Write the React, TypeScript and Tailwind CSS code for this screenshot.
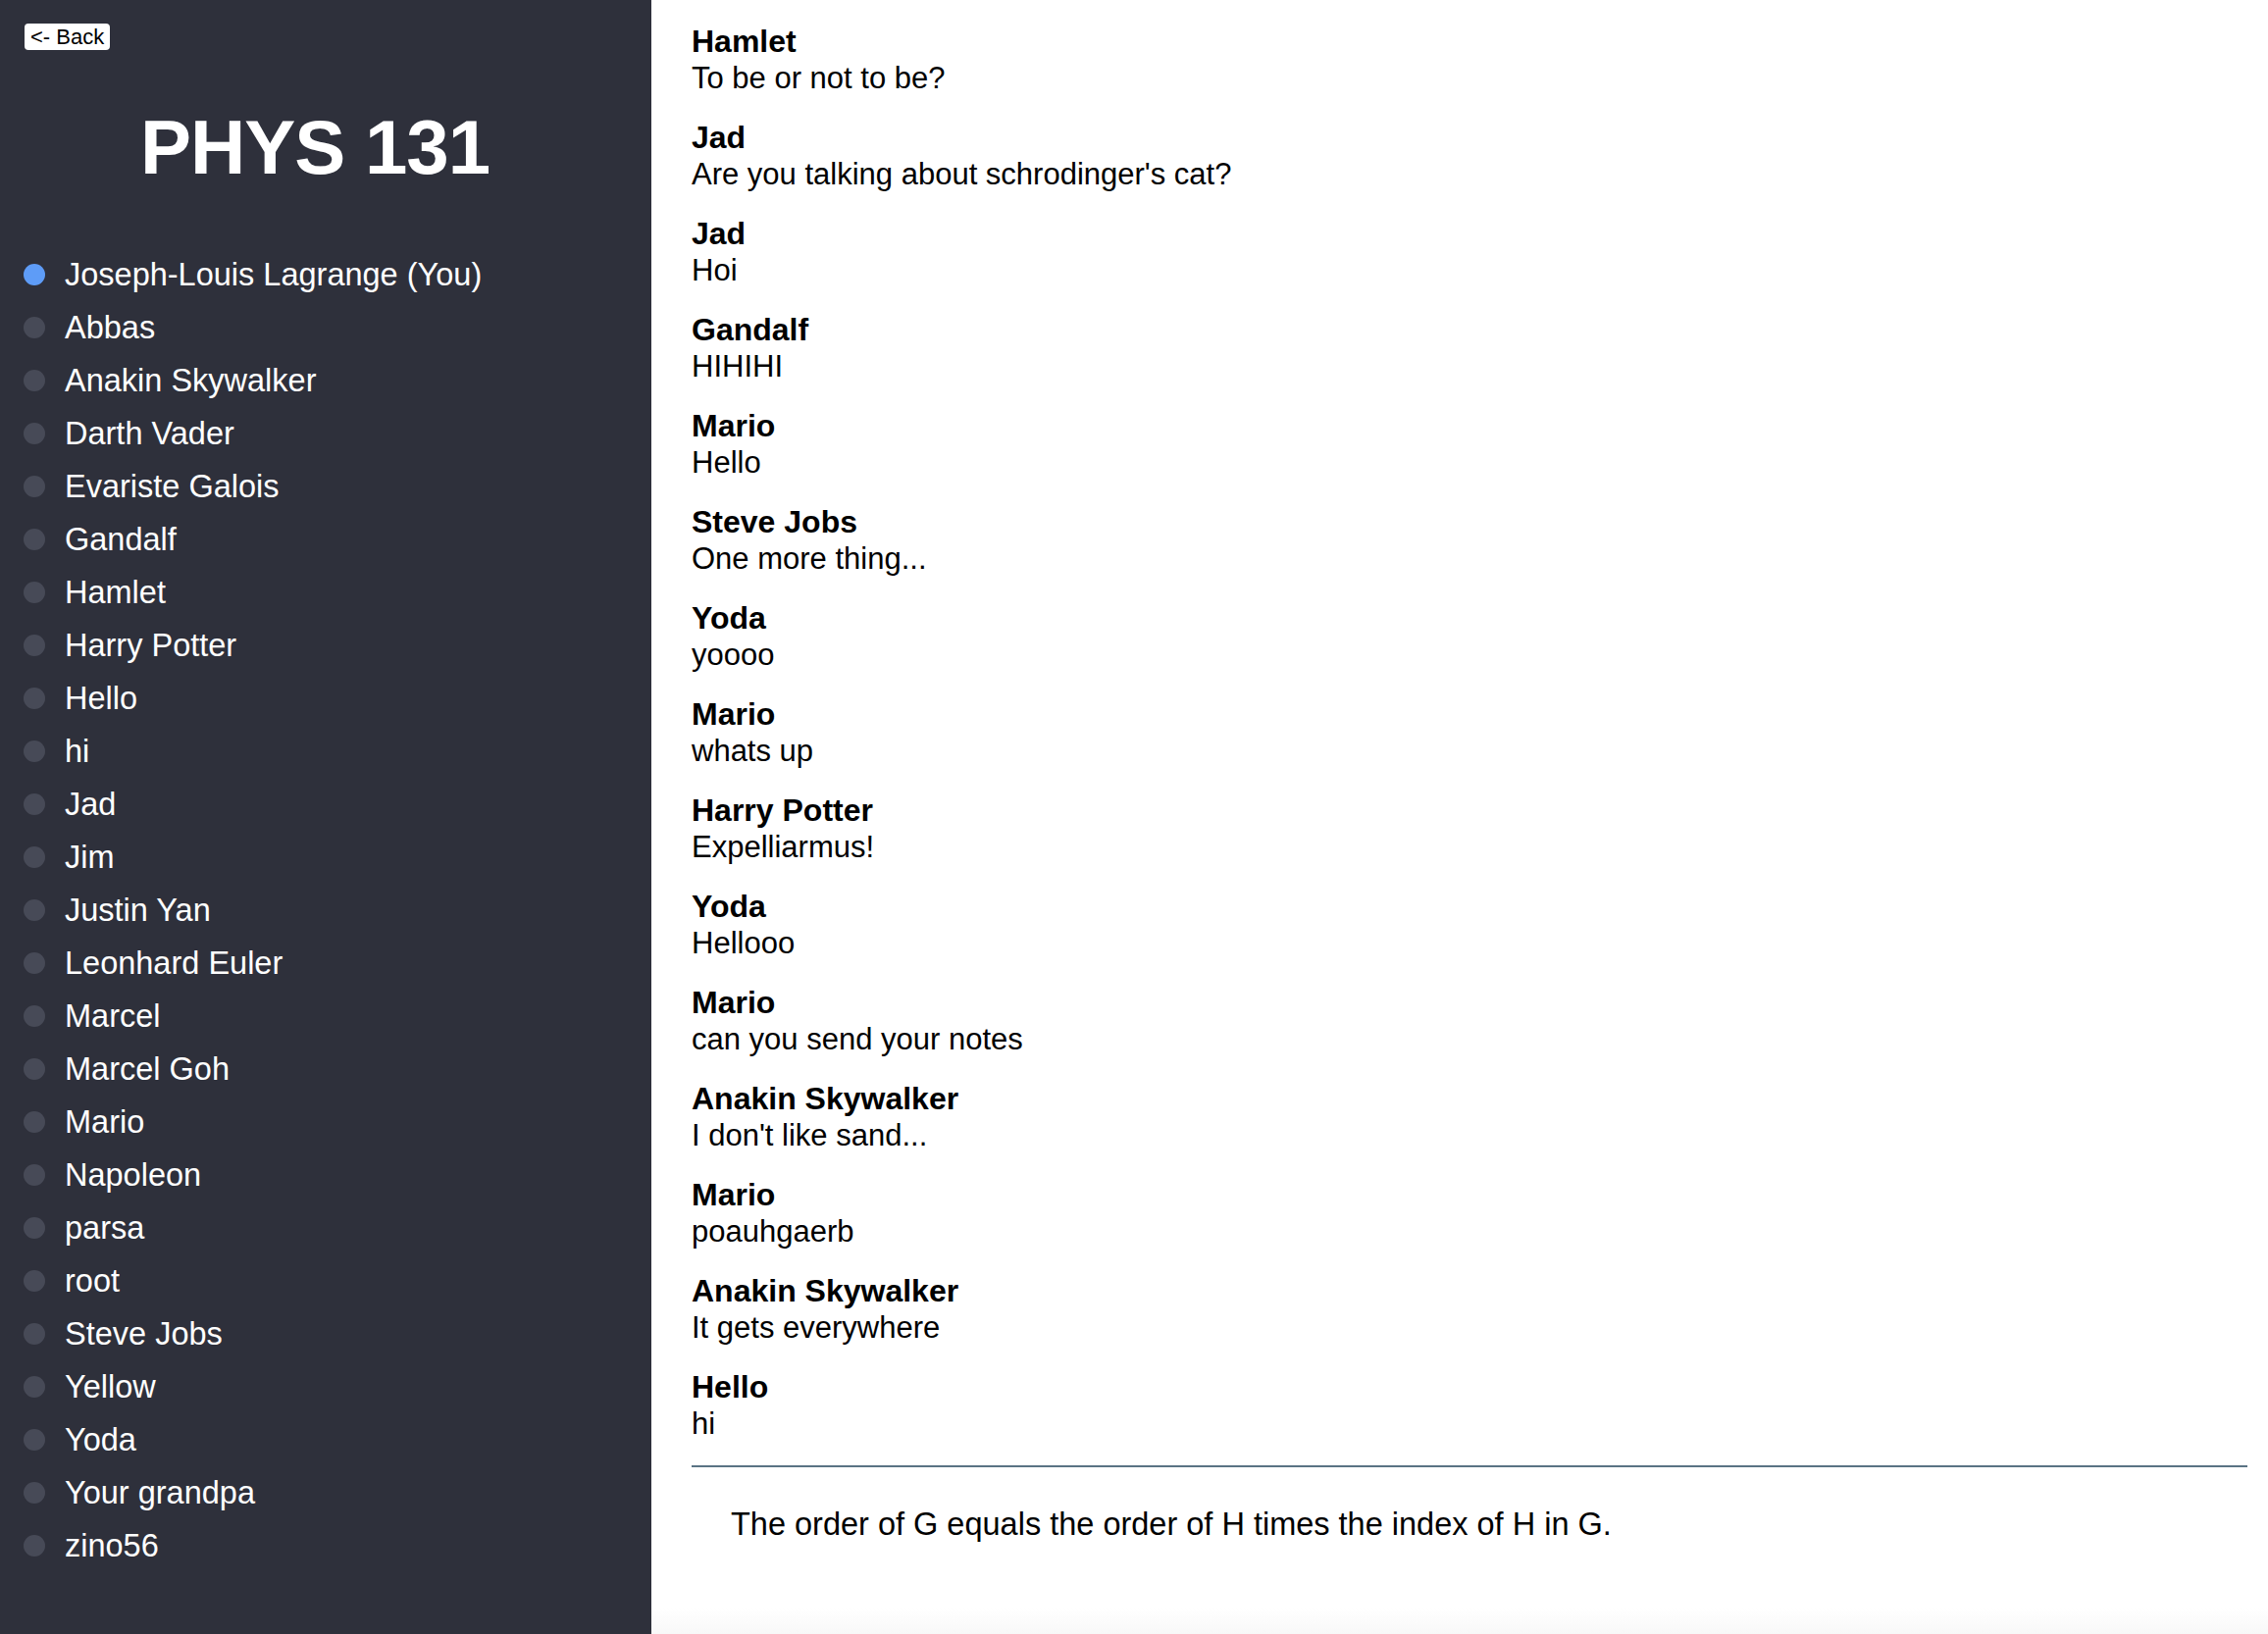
const members = [
  "Abbas",
  "Anakin Skywalker",
  "Darth Vader",
  "Evariste Galois",
  "Gandalf",
  "Hamlet",
  "Harry Potter",
  "Hello",
  "hi",
  "Jad",
  "Jim",
  "Justin Yan",
  "Leonhard Euler",
  "Marcel",
  "Marcel Goh",
  "Mario",
  "Napoleon",
  "parsa",
  "root",
  "Steve Jobs",
  "Yellow",
  "Yoda",
  "Your grandpa",
  "zino56",
];

const messages = [
  { author: "Hamlet", text: "To be or not to be?" },
  { author: "Jad", text: "Are you talking about schrodinger's cat?" },
  { author: "Jad", text: "Hoi" },
  { author: "Gandalf", text: "HIHIHI" },
  { author: "Mario", text: "Hello" },
  { author: "Steve Jobs", text: "One more thing..." },
  { author: "Yoda", text: "yoooo" },
  { author: "Mario", text: "whats up" },
  { author: "Harry Potter", text: "Expelliarmus!" },
  { author: "Yoda", text: "Hellooo" },
  { author: "Mario", text: "can you send your notes" },
  { author: "Anakin Skywalker", text: "I don't like sand..." },
  { author: "Mario", text: "poauhgaerb" },
  { author: "Anakin Skywalker", text: "It gets everywhere" },
  { author: "Hello", text: "hi" },
];

const MemberRow = ({ name, online }: { name: string; online?: boolean }) => (
  <li className="flex h-[54px] items-center">
    <span
      className={
        online
          ? "ml-[24px] h-[22px] w-[22px] rounded-full bg-[#5e9cf7]"
          : "ml-[24px] h-[22px] w-[22px] rounded-full bg-[#474a57]"
      }
    />
    <span className="ml-[20px] text-[32.5px] leading-[37px] text-white">{name}</span>
  </li>
);

const Sidebar = () => (
  <div className="flex w-[664px] shrink-0 flex-col bg-[#2e303b] pt-[24px]">
    <div className="pl-[25px]">
      <button className="rounded-[4px] bg-white px-[6px] text-[22px] leading-[27px] text-black">
        {"<- Back"}
      </button>
    </div>
    <h1 className="mt-[59px] pr-[22px] text-center text-[78px] font-bold leading-[78px] tracking-[-1px] text-white">
      PHYS 131
    </h1>
    <ul className="mt-[64px]">
      <MemberRow name="Joseph-Louis Lagrange (You)" online />
      {members.map((m) => (
        <MemberRow key={m} name={m} />
      ))}
    </ul>
  </div>
);

const App = () => {
  return (
    <div className="flex h-[1666px] w-full font-['Liberation_Sans',Arial,sans-serif]">
      <Sidebar />
      <div className="flex flex-1 flex-col bg-white">
        <div className="flex flex-col pl-[41px] pr-[21px] pt-[24px]">
          <div className="flex flex-col gap-[24px]">
            {messages.map((m, i) => (
              <div key={i} className="text-black">
                <div className="text-[32px] font-bold leading-[37px]">{m.author}</div>
                <div className="text-[31px] leading-[37px]">{m.text}</div>
              </div>
            ))}
          </div>
          <div className="mt-[24px] h-[2px] bg-[#5a7384]" />
          <div className="pl-[40px] pt-[40px] text-[32.5px] leading-[37px] text-black">
            The order of G equals the order of H times the index of H in G.
          </div>
        </div>
        <div className="flex-1" />
        <div className="h-[26px] bg-gradient-to-b from-white to-[#f8f8f8]" />
      </div>
    </div>
  );
};

export default App;
